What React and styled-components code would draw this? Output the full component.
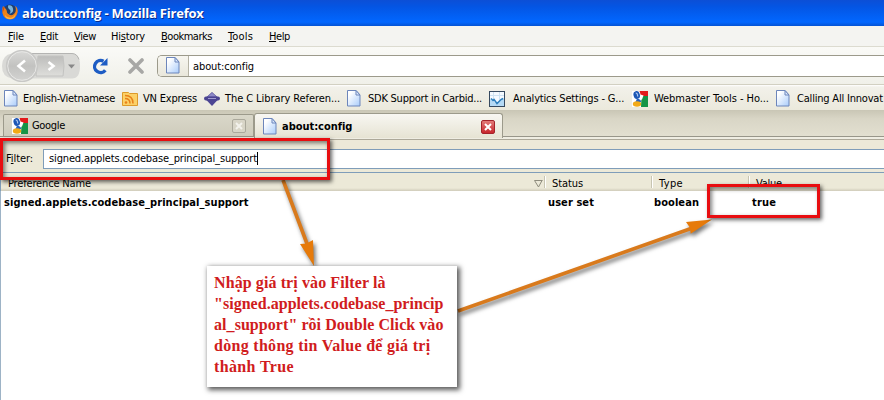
import React from 'react';
import styled, { createGlobalStyle, css } from 'styled-components';

const Global = createGlobalStyle`
  * { box-sizing: border-box; }
  html, body { margin: 0; overflow: hidden; }
  body { background: #fff; font: 11px/14px "DejaVu Sans Condensed", "DejaVu Sans", sans-serif; font-stretch: condensed; color: #000; }
  svg { display: block; flex: none; }
`;

const Label = styled.span`
  flex: none;
  width: ${p => p.$w}px;
  margin-left: ${p => p.$ml || 0}px;
  letter-spacing: ${p => p.$track || 0}px;
  font-weight: ${p => (p.$bold ? 700 : 400)};
  white-space: nowrap;
  ${p => p.$title && css`
    padding-top: 2px;
    font-family: "Open Sans", sans-serif; font-size: 13px; font-stretch: normal; color: #fff; text-shadow: 1px 1px 0 #0a2c8c;
  `}
`;
const Key = styled.u`text-underline-offset: 1px;`;

const Window = styled.main`
  position: relative; width: 884px; height: 400px; overflow: hidden;
  display: flex; flex-direction: column; background: #fff;
`;
const TitleBar = styled.header`
  height: 26px; flex: none; display: flex; align-items: center; padding: 0 0 2px 2px;
  background: linear-gradient(#0c4fd6 0, #0455e3 25%, #0261f6 65%, #0267ff 85%, #0453d4 100%);
`;
const MenuBar = styled.nav`
  height: 21px; flex: none; display: flex; align-items: center; padding: 1px 0 0 8px;
  background: #f4f4f1; border-bottom: 1px solid #dcdbd0;
`;
const NavBar = styled.div`
  height: 38px; flex: none; display: flex; align-items: center;
  background: linear-gradient(#fafaf7, #f0f0e9); border-bottom: 1px solid #d2d0c2;
`;
const Address = styled.div`
  height: 22px; width: 727px; margin-left: 13px; flex: none; display: flex; align-items: center;
  background: #fff; border: 1px solid #9c9a8b; border-right: 0; border-radius: 5px 0 0 5px; overflow: hidden;
  ${Label} { padding-top: 2px; }
`;
const Identity = styled.div`
  width: 31px; height: 20px; display: flex; align-items: center; justify-content: center;
  background: linear-gradient(#f7f6f0, #e9e7db); border-right: 1px solid #b5b3a5;
`;
const BookmarkBar = styled.div`
  height: 25px; flex: none; display: flex; align-items: center; padding: 2px 0 0 4px;
  background: linear-gradient(#fff 0, #f2f1ea 2px, #ebe9dc);
  ${Label} { padding-top: 1px; }
`;
const TabStrip = styled.div`
  height: 29px; flex: none; display: flex; align-items: flex-start; padding: 3px 0 0 3px;
  background: linear-gradient(#c9c6b5 0, #d9d6c6 9px, #e2dfd0 26px, #98968a 26px, #98968a 27px, #efede2 27px);
`;
const Tab = styled.div`
  height: ${p => (p.$active ? 25 : 23)}px; width: ${p => p.$w}px; flex: none;
  margin-top: ${p => (p.$active ? 0 : 1)}px;
  display: flex; align-items: center; padding: ${p => (p.$active ? '1px 0 0 8px' : '1px 0 0 8px')};
  border: 1px solid #9c9a8b; border-bottom: ${p => (p.$active ? 0 : '1px solid #98968a')};
  border-radius: ${p => (p.$active ? '3px 3px 0 0' : '2px 2px 0 0')};
  background: ${p => (p.$active ? 'linear-gradient(#f8f7f2, #e6e3d3)' : 'linear-gradient(#d9d7c9, #cfccbc)')};
`;
const Close = styled.span`
  width: 14px; height: 14px; flex: none; margin-left: ${p => p.$ml}px; border-radius: 2px;
  display: grid; place-items: center;
  border: 1px solid ${p => (p.$active ? '#a3232a' : '#aaa89b')};
  background: ${p => (p.$active ? 'linear-gradient(#e27a78, #c8262c)' : '#d8d5c7')};
`;
const FilterBar = styled.div`
  height: 33px; flex: none; display: flex; align-items: center; padding: 5px 0 0 6px;
  background: #ece9d8; border-top: 1px solid #aca899;
  ${Label} { padding-top: 1px; }
`;
const FilterInput = styled.div`
  height: 20px; width: 841px; margin-left: 10px; flex: none; display: flex; align-items: center;
  border: 1px solid #7f9db9; border-right: 0; background: #fff;
`;
const Caret = styled.i`width: 1px; height: 13px; background: #000;`;
const HeaderRow = styled.div`
  height: 19px; flex: none; display: flex; align-items: center; padding: 3px 0 0 7px;
  background: linear-gradient(#ece9d8 15px, #d0ccba 18px); border-top: 1px solid #7f9db9; border-left: 1px solid #7f9db9;
`;
const Divider = styled.i`width: 2px; height: 12px; margin: -3px 0 0 ${p => p.$ml}px; border-left: 1px solid #c7c5b2; border-right: 1px solid #fff;`;
const Body = styled.div`
  flex: 1; border-left: 1px solid #9db3c6; padding: 4px 0 0 3px;
`;
const Row = styled.div`display: flex; align-items: center; height: 15px;`;

const Frame = styled.div`
  position: absolute; left: ${p => p.$x}px; top: ${p => p.$y}px; width: ${p => p.$w}px; height: ${p => p.$h}px;
  border: 3px solid #e80d10; box-shadow: 2px 2px 4px rgba(0,0,0,.6), inset 2px 2px 4px rgba(0,0,0,.5);
`;
const Note = styled.div`
  position: absolute; left: 207px; top: 266px; width: 250px; height: 121px; padding: 6px 0 0 7px;
  background: #fff; box-shadow: 2px 2px 5px 1px rgba(0,0,0,.65);
  font: bold 16px/21px "Liberation Serif", serif; color: #d01c20;
`;
const NoteLine = styled.div`width: max-content; white-space: nowrap; letter-spacing: ${p => p.$track || 0}px;`;
const Arrows = styled.svg`position: absolute; left: 0; top: 0; filter: drop-shadow(2px 3px 2px rgba(0,0,0,.55));`;

const Page = () => (
  <svg width="14" height="17" viewBox="0 0 14 17">
    <defs><linearGradient id="pg" x1="0" y1="0" x2="1" y2="1"><stop offset=".2" stopColor="#fff" /><stop offset="1" stopColor="#a9ccfb" /></linearGradient></defs>
    <path d="M.5.5h8.500l4 4.500v11H.5z" fill="url(#pg)" stroke="#6d86bb" />
    <path d="M9 .5v4.500h4z" fill="#dbe9ff" stroke="#6d86bb" />
  </svg>
);
const Google = () => (
  <svg width="16" height="16" viewBox="0 0 16 16">
    <path d="M0 0h16v16H0z" fill="#fff" /><path d="M7.500 0H16v5H9z" fill="#e31b1b" /><path d="M9.500 5H16v11H9z" fill="#159447" />
    <path d="M8.500 3.500l3 1-1.500 4-2 .5z" fill="#fff" />
    <ellipse cx="4.700" cy="4" rx="3.200" ry="4" fill="#1d57b5" transform="rotate(-15 4.700 4)" />
    <path d="M5 7.500q4.500 1 4 3.500H3.500z" fill="#2a64be" /><ellipse cx="5" cy="13" rx="4.200" ry="2.700" fill="#f2aa17" />
    <path d="M3.700 2q2 0 2 3.500" stroke="#a9c4ee" strokeWidth="1.200" fill="none" />
  </svg>
);
const Feed = () => (
  <svg width="16" height="15" viewBox="0 0 16 15">
    <path d="M.5 1.500h6l1 1h8v12H.5z" fill="#fcd167" stroke="#dd9a2a" />
    <circle cx="4" cy="11.500" r="1.300" fill="#e8811a" /><path d="M3 7.500q5 0 5 5M3 4.500q8 0 8 8" fill="none" stroke="#e8811a" strokeWidth="1.500" />
  </svg>
);
const Diamond = () => (
  <svg width="16" height="14" viewBox="0 0 16 14">
    <path d="M8 0l7 6.500L8 14 1 6.500z" fill="#4d4694" /><path d="M8 .8l4.500 4h-9z" fill="#8d89c8" />
    <rect x="0" y="4.500" width="16" height="4" rx="2" fill="#4a4391" /><path d="M4 6.500h8" stroke="#a09bd0" />
  </svg>
);
const Chart = () => (
  <svg width="16" height="16" viewBox="0 0 16 16">
    <path d="M0 0h16v16H0z" fill="#f4faff" />
    <path d="M1 4.500h14M4.500 1v14M10.500 1v14" stroke="#cfe3f3" />
    <path d="M1 8l3 2 4 3 4-5 3-1v8H1z" fill="#b5daf5" />
    <path d="M2 7.500l2 2 1-1 3 4 4-4 2-1" fill="none" stroke="#2e7fbd" strokeWidth="1.500" />
    <rect x=".5" y=".5" width="15" height="15" fill="none" stroke="#36495f" />
  </svg>
);
const Firefox = () => (
  <svg width="16" height="16" viewBox="0 0 16 16">
    <circle cx="8" cy="7.500" r="7" fill="#1f3f70" /><path d="M6 1.500q4-1 5 3t-3.500 5.500q2-3 0-4.500t-1.500-4" fill="#79b4dc" />
    <path d="M1 2Q0 5 .4 9q1.600 6.500 7.600 6.500T15.700 8q.3-4-2.500-6.300 1.500 5-.4 7.300-2.800 3.500-5.800 1.500Q4.500 9 4.500 6L3 4z" fill="#ef8219" />
    <path d="M3 11q2 3 5.500 2.800T14 9q-1 6-6 6t-5-4z" fill="#fbb645" /><path d="M.8 2.500L2.500 4 .6 9z" fill="#c94f16" />
  </svg>
);
const NavButtons = () => (
  <svg width="82" height="32" viewBox="0 0 82 32">
    <defs>
      <linearGradient id="nb" x1="0" y1="0" x2="0" y2="1"><stop stopColor="#bdbdbb" /><stop offset="1" stopColor="#dededb" /></linearGradient>
      <linearGradient id="nc" x1="0" y1="0" x2="0" y2="1"><stop stopColor="#dadad8" /><stop offset=".5" stopColor="#c2c2c0" /><stop offset="1" stopColor="#d4d4d2" /></linearGradient>
    </defs>
    <path d="M12 3.500h60q8 0 8 12.500t-8 12.500H12Q2 27 2 16T12 3.500z" fill="#d9d9d6" />
    <path d="M12 3.500h60q5 0 7 6" fill="none" stroke="#b4b4b2" />
    <path d="M38 6h25q2 10 0 20H36z" fill="url(#nb)" stroke="#c3c3c1" />
    <circle cx="22" cy="16" r="15.500" fill="url(#nc)" stroke="#c8c8c6" strokeWidth="1.300" /><circle cx="22" cy="16" r="14.300" fill="none" stroke="#e7e7e5" />
    <path d="M25 10.500L18.500 16l6.500 5.500M48.500 12l5 4-5 4" fill="none" stroke="#fff" strokeWidth="2.600" />
    <path d="M68 14.500h7l-3.500 4z" fill="#888" />
  </svg>
);
const Icon = styled.span`margin-left: ${p => p.$ml}px; flex: none;`;
const Reload = () => (
  <svg width="18" height="18" viewBox="0 0 18 18">
    <path d="M14.300 13.200A6 6 0 1 1 12.500 4.300" fill="none" stroke="#1d5cc4" strokeWidth="3.400" /><path d="M16.500 1v7.500H9z" fill="#1d5cc4" />
  </svg>
);
const Stop = () => (
  <svg width="16" height="16" viewBox="0 0 16 16"><path d="M2 2l12 12M14 2L2 14" stroke="#a7a7a5" strokeWidth="3.600" strokeLinecap="round" /></svg>
);
const Cross = ({ c }) => (
  <svg width="8" height="8" viewBox="0 0 8 8"><path d="M1 1l6 6M7 1L1 7" stroke={c} strokeWidth="2" /></svg>
);

const noteLines = [
  ['Nhập giá trị vào Filter là', 0.1],
  ['"signed.applets.codebase_princip', 0.03],
  ['al_support" rồi Double Click vào', 0.06],
  ['dòng thông tin Value để giá trị', 0.3],
  ['thành True', 0.36],
];

export default function App() {
  return (
    <Window>
      <Global />
      <TitleBar><Firefox /><Label $w={182} $ml={4} $track={-0.2} $bold $title>about:config - Mozilla Firefox</Label></TitleBar>
      <MenuBar>
        <Label $w={16} $track={-0.13}><Key>F</Key>ile</Label>
        <Label $w={18} $ml={16} $track={-0.3}><Key>E</Key>dit</Label>
        <Label $w={22} $ml={16} $track={-0.37}><Key>V</Key>iew</Label>
        <Label $w={34} $ml={15} $track={-0.17}>Hi<Key>s</Key>tory</Label>
        <Label $w={51} $ml={16} $track={-0.48}><Key>B</Key>ookmarks</Label>
        <Label $w={25} $ml={16} $track={0.16}><Key>T</Key>ools</Label>
        <Label $w={21} $ml={16} $track={-0.39}><Key>H</Key>elp</Label>
      </MenuBar>
      <NavBar>
        <NavButtons />
        <Icon $ml={9}><Reload /></Icon><Icon $ml={19}><Stop /></Icon>
        <Address><Identity><Page /></Identity><Label $w={61} $ml={4} $track={-0.1}>about:config</Label></Address>
      </NavBar>
      <BookmarkBar>
        <Page /><Label $w={92} $ml={5} $track={-0.29}>English-Vietnamese</Label>
        <Icon $ml={7}><Feed /></Icon><Label $w={54} $ml={5} $track={-0.19}>VN Express</Label>
        <Icon $ml={7}><Diamond /></Icon><Label $w={115} $ml={5} $track={-0.08}>The C Library Referen...</Label>
        <Icon $ml={7}><Page /></Icon><Label $w={114} $ml={7} $track={-0.24}>SDK Support in Carbid...</Label>
        <Icon $ml={7}><Chart /></Icon><Label $w={111} $ml={8} $track={-0.18}>Analytics Settings - G...</Label>
        <Icon $ml={8}><Google /></Icon><Label $w={115} $ml={6} $track={-0.06}>Webmaster Tools - Ho...</Label>
        <Icon $ml={7}><Page /></Icon><Label $w={87} $ml={7} $track={-0.2}>Calling All Innovat</Label>
      </BookmarkBar>
      <TabStrip>
        <Tab $w={251}><Google /><Label $w={33} $ml={4} $track={-0.32}>Google</Label><Close $ml={167}><Cross c="#f3f2ec" /></Close></Tab>
        <Tab $w={249} $active><Page /><Label $w={70} $ml={5} $track={-0.04} $bold>about:config</Label><Close $ml={129} $active><Cross c="#fff" /></Close></Tab>
      </TabStrip>
      <FilterBar>
        <Label $w={27} $track={-0.08}>F<Key>i</Key>lter:</Label>
        <FilterInput><Label $w={208} $ml={5} $track={-0.14}>signed.applets.codebase_principal_support</Label><Caret /></FilterInput>
      </FilterBar>
      <HeaderRow>
        <Label $w={83} $track={-0.16}>Preference Name</Label>
        <Icon $ml={443}><svg width="9" height="8" viewBox="0 0 9 8"><path d="M8 .5L4.500 7 .5.5h8" fill="none" stroke="#8e8c7d" /></svg></Icon>
        <Divider $ml={1} /><Label $w={31} $ml={6} $track={-0.09}>Status</Label>
        <Divider $ml={68} /><Label $w={24} $ml={6} $track={0.36}>Type</Label>
        <Divider $ml={65} /><Label $w={26} $ml={6} $track={-0.22}>Value</Label>
      </HeaderRow>
      <Body><Row>
        <Label $w={245} $bold $track={0.08}>signed.applets.codebase_principal_support</Label>
        <Label $w={46} $ml={299} $bold $track={0.08}>user set</Label>
        <Label $w={45} $ml={60} $bold $track={0.07}>boolean</Label>
        <Label $w={24} $ml={53} $bold $track={0.16}>true</Label>
      </Row></Body>
      <Arrows width="884" height="400" viewBox="0 0 884 400" fill="#e67a0a">
        <path d="M283 180L307.500 245M458 311L691 228.500" stroke="#d97a1c" strokeWidth="3.600" />
        <path d="M300 244l6.500-.5 6.500-3.500 1 26zM686 222l26-2.500L690.700 233.700l-.7-6z" />
      </Arrows>
      <Frame $x={0} $y={138} $w={330} $h={42} />
      <Frame $x={707} $y={184} $w={113} $h={34} />
      <Note>{noteLines.map(([text, track]) => <NoteLine key={text} $track={track}>{text}</NoteLine>)}</Note>
    </Window>
  );
}
